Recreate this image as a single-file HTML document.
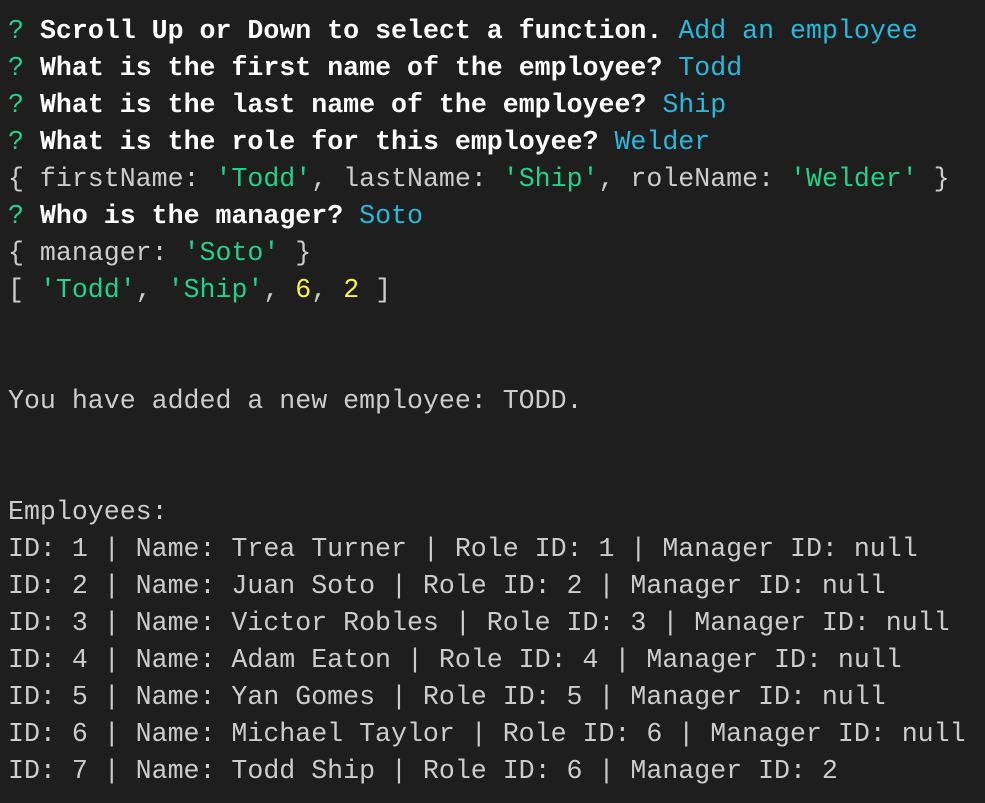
<!DOCTYPE html>
<html><head><meta charset="utf-8"><style>
html,body{margin:0;padding:0;background:#1e1e1e;width:985px;height:803px;overflow:hidden}
pre{margin:0;padding:13px 0 0 8px;font-family:"Liberation Mono","DejaVu Sans Mono",monospace;font-size:26.6px;line-height:37px;color:#cccccc;white-space:pre}
.q{color:#23d18b}.b{font-weight:bold;color:#ffffff}.c{color:#29b8db}.s{color:#23d18b}.y{color:#f5f543}
</style></head><body><pre><span class="q">?</span> <span class="b">Scroll Up or Down to select a function.</span> <span class="c">Add an employee</span>
<span class="q">?</span> <span class="b">What is the first name of the employee?</span> <span class="c">Todd</span>
<span class="q">?</span> <span class="b">What is the last name of the employee?</span> <span class="c">Ship</span>
<span class="q">?</span> <span class="b">What is the role for this employee?</span> <span class="c">Welder</span>
{ firstName: <span class="s">'Todd'</span>, lastName: <span class="s">'Ship'</span>, roleName: <span class="s">'Welder'</span> }
<span class="q">?</span> <span class="b">Who is the manager?</span> <span class="c">Soto</span>
{ manager: <span class="s">'Soto'</span> }
[ <span class="s">'Todd'</span>, <span class="s">'Ship'</span>, <span class="y">6</span>, <span class="y">2</span> ]


You have added a new employee: TODD.


Employees:
ID: 1 | Name: Trea Turner | Role ID: 1 | Manager ID: null
ID: 2 | Name: Juan Soto | Role ID: 2 | Manager ID: null
ID: 3 | Name: Victor Robles | Role ID: 3 | Manager ID: null
ID: 4 | Name: Adam Eaton | Role ID: 4 | Manager ID: null
ID: 5 | Name: Yan Gomes | Role ID: 5 | Manager ID: null
ID: 6 | Name: Michael Taylor | Role ID: 6 | Manager ID: null
ID: 7 | Name: Todd Ship | Role ID: 6 | Manager ID: 2</pre></body></html>
